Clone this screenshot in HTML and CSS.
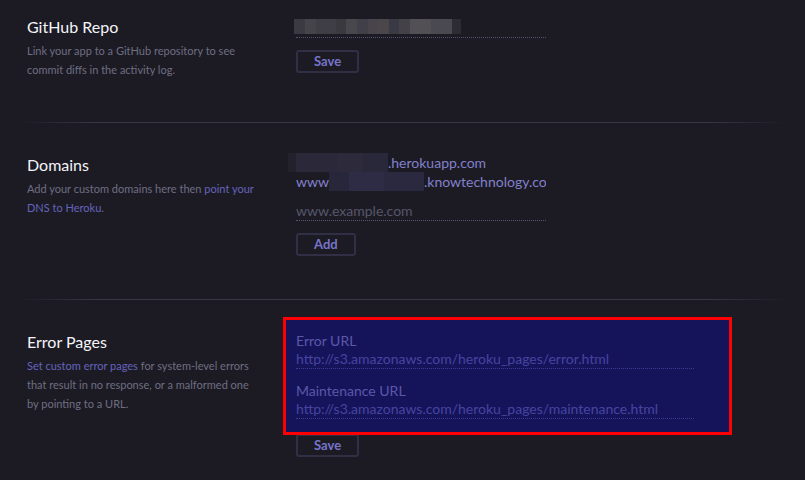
FILE: index.html
```html
<!DOCTYPE html>
<html>
<head>
<meta charset="utf-8">
<link rel="stylesheet" href="styles.css">
</head>
<body>
<div class="page">
  <section class="row first">
    <div class="info">
      <h2 class="title">GitHub Repo</h2>
      <p class="desc">Link your app to a GitHub repository to see commit diffs in the activity log.</p>
    </div>
    <div class="form form-github">
      <div class="field"><span class="blur blur-repo"></span></div>
      <button class="btn">Save</button>
    </div>
  </section>
  <div class="sep"></div>
  <section class="row">
    <div class="info">
      <h2 class="title">Domains</h2>
      <p class="desc">Add your custom domains here then <a class="link">point your DNS to Heroku</a>.</p>
    </div>
    <div class="form form-domains">
      <div class="domain"><span class="blur blur-app"></span>.herokuapp.com</div>
      <div class="domain">www<span class="blur blur-www"></span>.knowtechnology.com</div>
      <div class="field field-domain"><span class="placeholder">www.example.com</span></div>
      <button class="btn">Add</button>
    </div>
  </section>
  <div class="sep"></div>
  <section class="row">
    <div class="info">
      <h2 class="title">Error Pages</h2>
      <p class="desc"><a class="link">Set custom error pages</a> for system-level errors that result in no response, or a malformed one by pointing to a URL.</p>
    </div>
    <div class="form">
      <div class="highlight">
        <div class="label">Error URL</div>
        <div class="field field-url"><span class="placeholder-url">http://s3.amazonaws.com/heroku_pages/error.html</span></div>
        <div class="label label-next">Maintenance URL</div>
        <div class="field field-url"><span class="placeholder-url">http://s3.amazonaws.com/heroku_pages/maintenance.html</span></div>
      </div>
      <button class="btn">Save</button>
    </div>
  </section>
</div>
</body>
</html>
```

FILE: styles.css
```css
* { box-sizing: border-box; }
html, body {
  margin: 0;
  padding: 0;
  background: #1c1b24;
  height: 100%;
  overflow: hidden;
}
body {
  font-family: Lato, "Open Sans", sans-serif;
  color: #f2f2f5;
}
.page { width: 805px; }
.row {
  display: flex;
  padding: 32px 0 43px;
}
.row.first { padding-top: 17px; }
.info {
  width: 296px;
  padding-left: 27px;
  flex: none;
}
.title {
  margin: 0;
  font-size: 16px;
  line-height: 20px;
  font-weight: 400;
  color: #f4f4f8;
}
.desc {
  margin: 4px 0 0;
  width: 232px;
  font-size: 11px;
  line-height: 19px;
  color: #6f6e82;
}
.link { color: #6563bd; }
.sep {
  height: 1px;
  background: linear-gradient(to right, rgba(58,57,70,0) 2%, #383744 12%, #383744 88%, rgba(58,57,70,0) 98%);
}
.form {
  display: flex;
  flex-direction: column;
  align-items: flex-start;
}
.form-github { padding-top: 2px; }
.form-domains { margin-top: -2px; }
.field {
  width: 250px;
  height: 19px;
  border-bottom: 1px dotted #55546e;
  font-size: 14px;
  line-height: 18px;
  display: flex;
  align-items: flex-start;
}
.blur { display: inline-block; flex: none; }
.blur-repo {
  width: 167px;
  height: 15px;
  margin-left: -2px;
  background: linear-gradient(to right,
    #3b3a43 0, #3b3a43 11px, #45444b 11px, #45444b 22px, #3f3e47 22px, #3f3e47 42px,
    #3a3940 42px, #3a3940 52px, #48474c 52px, #48474c 63px, #41404a 63px, #41404a 74px,
    #47454b 74px, #47454b 84px, #4b4649 84px, #4b4649 95px, #3a3a44 95px, #3a3a44 105px,
    #434249 105px, #434249 116px, #524f55 116px, #524f55 137px, #4a4850 137px, #4a4850 158px,
    #2d2c33 158px, #2d2c33 167px);
}
.btn {
  margin-top: 12px;
  height: 23px;
  padding: 0 16px;
  border: 2px solid #302f45;
  border-radius: 3px;
  background: #1c1b24;
  color: #7774c9;
  font-family: Lato, "Open Sans", sans-serif;
  font-weight: 700;
  font-size: 13px;
  line-height: 19px;
}
.domain {
  width: 250px;
  font-size: 14px;
  line-height: 19px;
  height: 19px;
  color: #8380cc;
  white-space: nowrap;
  overflow: hidden;
  display: flex;
}
.domain:first-child { overflow: visible; }
.blur-app {
  width: 100px;
  height: 19px;
  margin-left: -8px;
  background: linear-gradient(to right, #22212c 0, #22212c 8px, #2a2839 8px, #2a2839 50px, #2c2a3b 50px, #2c2a3b 75px, #29273a 75px);
}
.blur-www {
  width: 95px;
  height: 20px;
  background: linear-gradient(to right, #28263a 0, #28263a 20px, #2e2c44 20px, #2e2c44 55px, #2b2940 55px);
}
.field-domain { margin-top: 11px; }
.placeholder { color: #57566b; }
.highlight {
  position: relative;
  margin: -15px 0 -13px -13px;
  padding: 12px 35px 13px 10px;
  border: 3px solid #ff0000;
  background: #15145b;
}
.label {
  font-size: 14px;
  line-height: 18px;
  color: #5b58a8;
}
.label-next { margin-top: 13px; }
.field-url {
  width: 398px;
  border-bottom-color: #3d3b94;
}
.placeholder-url { color: #4744a0; white-space: nowrap; }
```
